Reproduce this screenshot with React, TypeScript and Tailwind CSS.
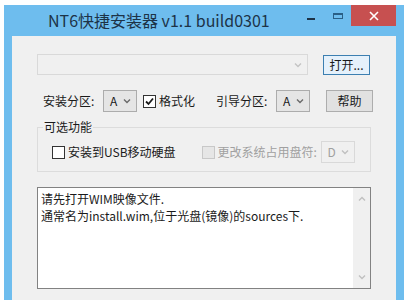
const font = { fontFamily: '"Noto Sans CJK SC", "Noto Sans", sans-serif' };

function Chevron({ color = "#7a7a7a" }: { color?: string }) {
  return (
    <svg width="8" height="6" viewBox="0 0 8 6">
      <path d="M1 1.5 L4 4.5 L7 1.5" fill="none" stroke={color} strokeWidth="1.4" />
    </svg>
  );
}

function Select({ value, disabled = false }: { value: string; disabled?: boolean }) {
  return (
    <div
      className={`flex h-[22px] w-[34px] items-center justify-between border pl-[6px] pr-[5px] text-[12px] ${
        disabled ? "border-[#d9d9d9] bg-[#f0f0f0] text-[#a0a0a0]" : "border-[#acacac] bg-[#e5e5e5] text-[#1a1a1a]"
      }`}
    >
      <span>{value}</span>
      <Chevron color={disabled ? "#c0c0c0" : "#6a6a6a"} />
    </div>
  );
}

function Checkbox({ checked = false, disabled = false }: { checked?: boolean; disabled?: boolean }) {
  return (
    <div
      className={`flex h-[13px] w-[13px] items-center justify-center border ${
        disabled ? "border-[#c8c8c8] bg-[#e6e6e6]" : "border-[#333333] bg-white"
      }`}
    >
      {checked && (
        <svg width="11" height="11" viewBox="0 0 11 11">
          <path d="M2 5.5 L4.5 8 L9 2.5" fill="none" stroke="#1a1a1a" strokeWidth="1.8" />
        </svg>
      )}
    </div>
  );
}

export default function App() {
  return (
    <div className="h-[300px] w-[413px] overflow-hidden bg-white pl-[4px] pt-[5px]" style={font}>
      <div className="flex h-[295px] w-[400px] flex-col bg-[#6ebdee]">
        {/* title bar */}
        <div className="flex h-[31px] items-start">
          <div className="pl-[44px] pt-[3px] text-[16px] leading-[24px] text-[#1d3347]">
            NT6快捷安装器 v1.1 build0301
          </div>
          <div className="ml-auto flex items-start">
            <div className="mr-[18px] mt-[13px] h-[2px] w-[8px] bg-[#1d3347]" />
            <div className="mr-[8px] mt-[8px] h-[6px] w-[10px] border border-t-2 border-[#2a5f86]" />
            <div className="flex h-[21px] w-[45px] items-center justify-center bg-[#c75050]">
              <svg width="10" height="10" viewBox="0 0 10 10">
                <path d="M1 1 L9 9 M9 1 L1 9" stroke="white" strokeWidth="1.6" />
              </svg>
            </div>
            <div className="w-[8px]" />
          </div>
        </div>

        {/* client */}
        <div className="mx-[8px] flex-1 bg-[#f0f0f0] pl-[25px] pt-[18px] text-[12px] text-[#1a1a1a]">
          <div className="flex items-center">
            <div className="flex h-[21px] w-[271px] items-center justify-end border border-[#d9d9d9] bg-[#f0f0f0] pr-[5px]">
              <Chevron color="#c4c4c4" />
            </div>
            <div className="ml-[15px] flex h-[20px] w-[47px] items-center justify-center border border-[#3c7fb1] bg-[#e5f1fb]">
              打开...
            </div>
          </div>

          <div className="mt-[15px] flex h-[22px] items-center">
            <span className="ml-[6px] w-[60px]">安装分区:</span>
            <Select value="A" />
            <div className="ml-[6px] flex items-center gap-[3px]">
              <Checkbox checked />
              <span>格式化</span>
            </div>
            <span className="ml-[21px] w-[60px]">引导分区:</span>
            <Select value="A" />
            <div className="ml-[16px] flex h-[22px] w-[47px] items-center justify-center border border-[#adadad] bg-[#e1e1e1]">
              帮助
            </div>
          </div>

          <div className="relative mt-[15px] h-[45px] w-[334px] border border-[#dcdcdc]">
            <span className="absolute left-[5px] top-[-10px] bg-[#f0f0f0] px-[1px] leading-[18px]">可选功能</span>
            <div className="flex h-full items-center pt-[5px]">
              <div className="ml-[14px] flex items-center gap-[3px]">
                <Checkbox />
                <span>安装到USB移动硬盘</span>
              </div>
              <div className="ml-[26px] flex items-center gap-[3px] text-[#a0a0a0]">
                <Checkbox disabled />
                <span className="w-[106px]">更改系统占用盘符:</span>
              </div>
              <div className="-ml-[3px]">
                <Select value="D" disabled />
              </div>
            </div>
          </div>

          <div className="mt-[15px] flex h-[102px] w-[334px] border border-[#828282] bg-white">
            <div className="flex-1 pl-[3px] pt-[2px] leading-[17px]">
              <div>请先打开WIM映像文件.</div>
              <div>通常名为install.wim,位于光盘(镜像)的sources下.</div>
            </div>
            <div className="flex w-[17px] flex-col items-center justify-between bg-[#f0f0f0] py-[8px]">
              <div className="rotate-180">
                <Chevron color="#c0c0c0" />
              </div>
              <Chevron color="#c0c0c0" />
            </div>
          </div>
        </div>
      </div>
    </div>
  );
}
